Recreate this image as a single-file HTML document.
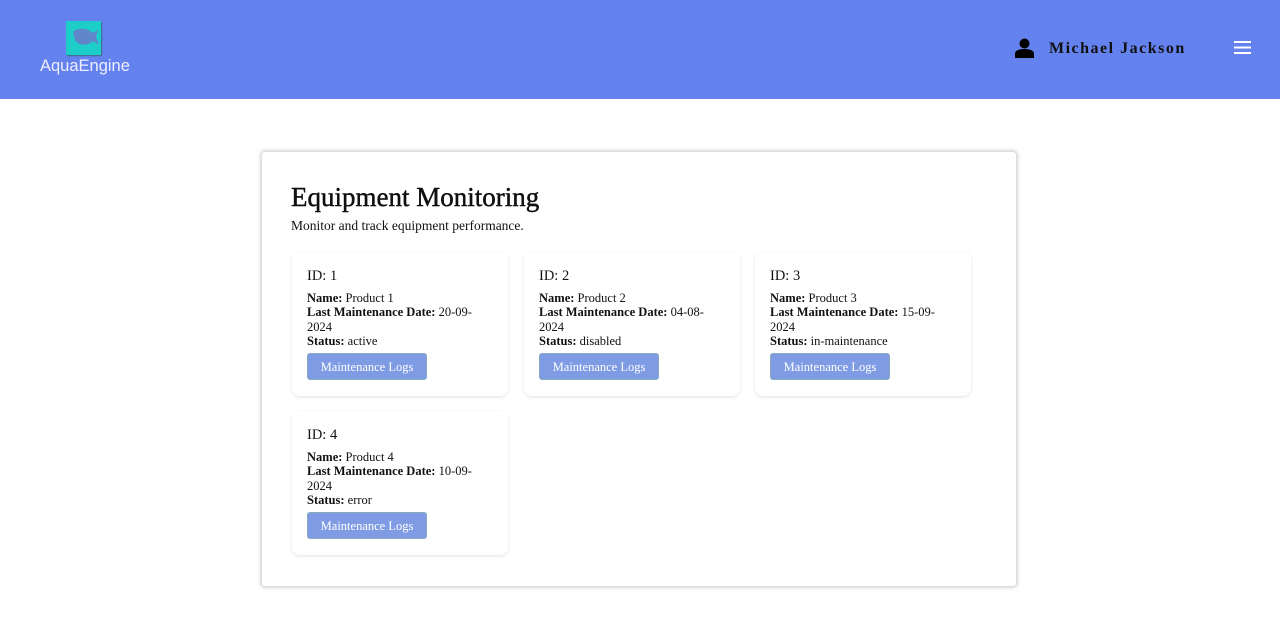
<!DOCTYPE html>
<html><head><style>
*{margin:0;padding:0;box-sizing:border-box}
body{width:1280px;height:618px;background:#fff;font-family:"Liberation Serif",serif;color:#111;position:relative;overflow:hidden}
.hdr{position:absolute;left:0;top:0;width:1280px;height:99px;background:#6482ee}
.logo{position:absolute;left:66px;top:21px;width:35px;height:34px;background:#1ccdc8;box-shadow:1px 1px 1px #3a6a8a}
.lt{position:absolute;left:40px;top:57px;font-family:"Liberation Sans",sans-serif;font-size:16.5px;color:#eef}
.user{position:absolute;left:1049px;top:40px;font-size:16px;font-weight:bold;letter-spacing:1.5px;color:#111}
.main{position:absolute;left:261px;top:151px;width:756px;height:436px;border:1px solid #ddd;border-radius:4px;box-shadow:0 0 4px rgba(0,0,0,.25)}
h1{position:absolute;left:291px;top:182px;font-size:27px;font-weight:normal;-webkit-text-stroke:.4px #000}
.sub{position:absolute;left:291px;top:218px;font-size:13.5px}
.c{position:absolute;width:216px;height:144px;border-radius:8px;box-shadow:0 1px 3px rgba(0,0,0,.12);padding:15px 15px;font-size:12.5px;line-height:14.3px}
.c .id{font-size:14.5px;margin-bottom:6px;line-height:18px}
.c b{font-weight:bold}
.btn{position:absolute;left:15px;top:101px;width:120px;height:27px;background:#7f9be4;border:1px solid #8ab;border-radius:3px;color:#fff;font-size:12.5px;text-align:center;line-height:26px}
</style></head><body>
<div class="hdr">
<div class="logo"><svg width="35" height="34"><path d="M7 11 C12 6 22 7 27 12 L32 9 L30 16 L33 24 L27 20 C22 25 12 25 9 19 Z" fill="#5f86c9"/></svg></div>
<div class="lt">AquaEngine</div>
<svg style="position:absolute;left:1015px;top:38px" width="20" height="21"><circle cx="9.5" cy="5.5" r="5" fill="#000"/><path d="M0 20 V16 C0 12 5 11 9.5 11 C14 11 19 12 19 16 V20Z" fill="#000"/></svg>
<div class="user">Michael Jackson</div>
<svg style="position:absolute;left:1234px;top:40px" width="17" height="15"><rect y="1" width="17" height="2" fill="#fff"/><rect y="6.5" width="17" height="2" fill="#fff"/><rect y="12" width="17" height="2" fill="#fff"/></svg>
</div>
<div class="main"></div>
<h1>Equipment Monitoring</h1>
<div class="sub">Monitor and track equipment performance.</div>
<div class="c" style="left:292px;top:252px"><div class="id">ID: 1</div><b>Name:</b> Product 1<br><b>Last Maintenance Date:</b> 20-09-<br>2024<br><b>Status:</b> active<div class="btn">Maintenance Logs</div></div>
<div class="c" style="left:524px;top:252px"><div class="id">ID: 2</div><b>Name:</b> Product 2<br><b>Last Maintenance Date:</b> 04-08-<br>2024<br><b>Status:</b> disabled<div class="btn">Maintenance Logs</div></div>
<div class="c" style="left:755px;top:252px"><div class="id">ID: 3</div><b>Name:</b> Product 3<br><b>Last Maintenance Date:</b> 15-09-<br>2024<br><b>Status:</b> in-maintenance<div class="btn">Maintenance Logs</div></div>
<div class="c" style="left:292px;top:411px"><div class="id">ID: 4</div><b>Name:</b> Product 4<br><b>Last Maintenance Date:</b> 10-09-<br>2024<br><b>Status:</b> error<div class="btn">Maintenance Logs</div></div>
</body></html>
